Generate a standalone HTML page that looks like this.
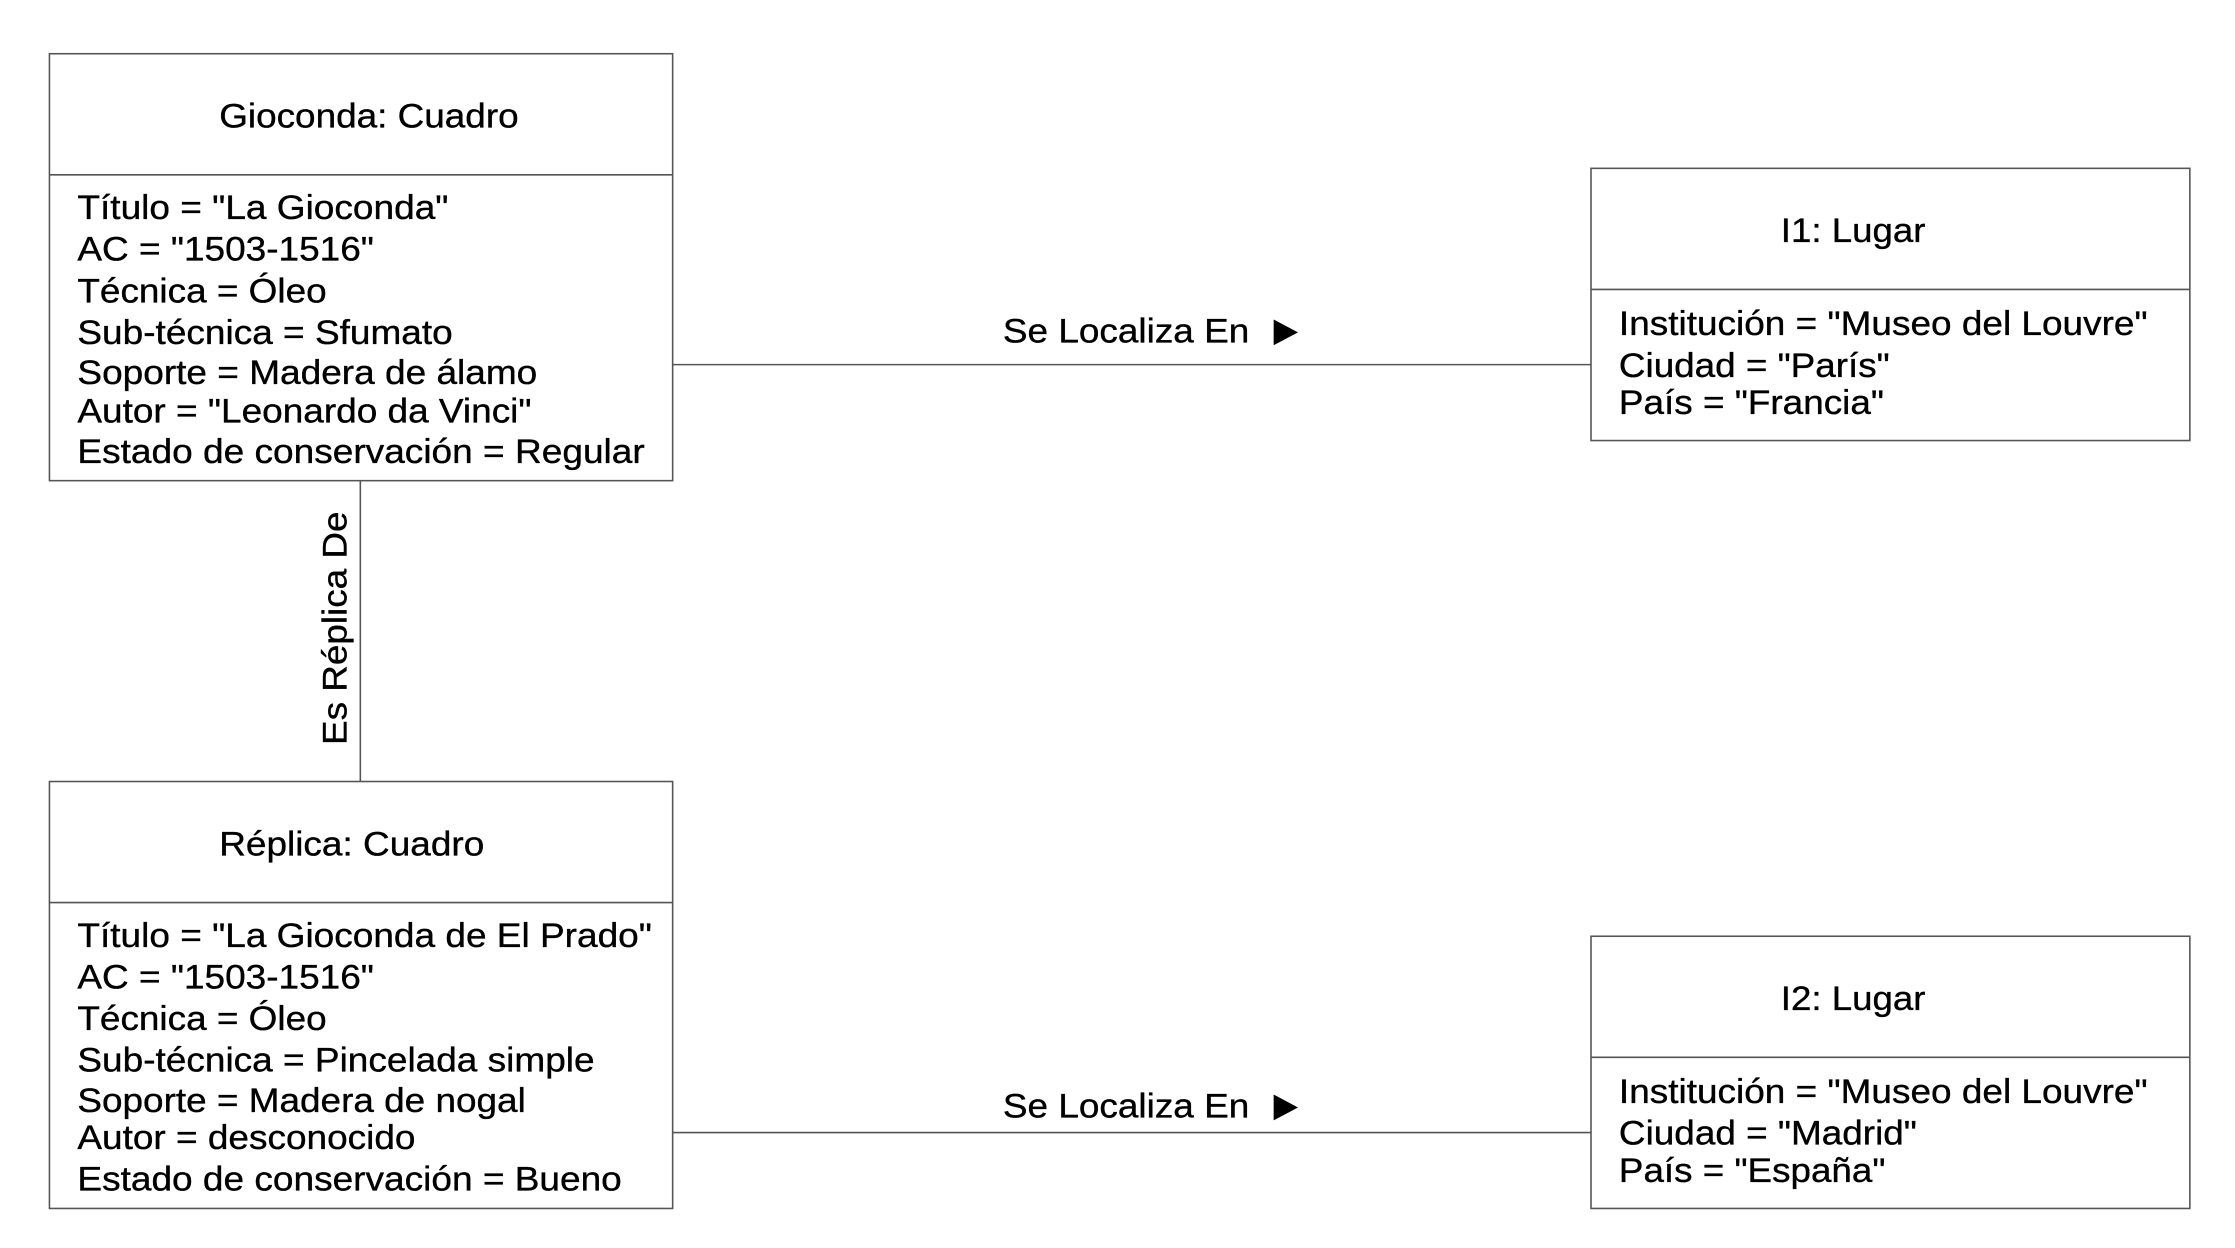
<!DOCTYPE html>
<html><head><meta charset="utf-8"><style>html,body{margin:0;padding:0;background:#fff;overflow:hidden}svg{display:block}text{font-family:"Liberation Sans",Arial,sans-serif;font-size:24px;fill:#000;stroke:#000;stroke-width:0.25px}</style></head>
<body>
<svg width="2235" height="1248" viewBox="0 0 1560 871.1" xmlns="http://www.w3.org/2000/svg">
<g fill="none" stroke="#555" stroke-width="1.1">
<rect x="34.5" y="37.5" width="435" height="298"/><line x1="34.5" y1="122" x2="469.5" y2="122"/>
<rect x="1110.5" y="117.5" width="418" height="190"/><line x1="1110.5" y1="202" x2="1528.5" y2="202"/>
<rect x="34.5" y="545.5" width="435" height="298"/><line x1="34.5" y1="630" x2="469.5" y2="630"/>
<rect x="1110.5" y="653.5" width="418" height="190"/><line x1="1110.5" y1="738" x2="1528.5" y2="738"/>
<line x1="469.5" y1="254.5" x2="1110.5" y2="254.5"/>
<line x1="469.5" y1="790.5" x2="1110.5" y2="790.5"/>
<line x1="251.5" y1="335.5" x2="251.5" y2="545.5"/>
</g>
<text x="153" y="89" textLength="209" lengthAdjust="spacingAndGlyphs">Gioconda: Cuadro</text>
<text x="54" y="153" textLength="259" lengthAdjust="spacingAndGlyphs">Título = "La Gioconda"</text>
<text x="54" y="182" textLength="207" lengthAdjust="spacingAndGlyphs">AC = "1503-1516"</text>
<text x="54" y="211" textLength="174" lengthAdjust="spacingAndGlyphs">Técnica = Óleo</text>
<text x="54" y="240" textLength="262" lengthAdjust="spacingAndGlyphs">Sub-técnica = Sfumato</text>
<text x="54" y="268" textLength="321" lengthAdjust="spacingAndGlyphs">Soporte = Madera de álamo</text>
<text x="54" y="295" textLength="317" lengthAdjust="spacingAndGlyphs">Autor = "Leonardo da Vinci"</text>
<text x="54" y="323" textLength="396" lengthAdjust="spacingAndGlyphs">Estado de conservación = Regular</text>

<text x="1243" y="169" textLength="101" lengthAdjust="spacingAndGlyphs">I1: Lugar</text>
<text x="1130" y="234" textLength="369" lengthAdjust="spacingAndGlyphs">Institución = "Museo del Louvre"</text>
<text x="1130" y="263" textLength="189" lengthAdjust="spacingAndGlyphs">Ciudad = "París"</text>
<text x="1130" y="289" textLength="185" lengthAdjust="spacingAndGlyphs">País = "Francia"</text>

<text x="153" y="597" textLength="185" lengthAdjust="spacingAndGlyphs">Réplica: Cuadro</text>
<text x="54" y="661" textLength="401" lengthAdjust="spacingAndGlyphs">Título = "La Gioconda de El Prado"</text>
<text x="54" y="690" textLength="207" lengthAdjust="spacingAndGlyphs">AC = "1503-1516"</text>
<text x="54" y="719" textLength="174" lengthAdjust="spacingAndGlyphs">Técnica = Óleo</text>
<text x="54" y="748" textLength="361" lengthAdjust="spacingAndGlyphs">Sub-técnica = Pincelada simple</text>
<text x="54" y="776" textLength="313" lengthAdjust="spacingAndGlyphs">Soporte = Madera de nogal</text>
<text x="54" y="802" textLength="236" lengthAdjust="spacingAndGlyphs">Autor = desconocido</text>
<text x="54" y="831" textLength="380" lengthAdjust="spacingAndGlyphs">Estado de conservación = Bueno</text>

<text x="1243" y="705" textLength="101" lengthAdjust="spacingAndGlyphs">I2: Lugar</text>
<text x="1130" y="770" textLength="369" lengthAdjust="spacingAndGlyphs">Institución = "Museo del Louvre"</text>
<text x="1130" y="799" textLength="208" lengthAdjust="spacingAndGlyphs">Ciudad = "Madrid"</text>
<text x="1130" y="825" textLength="186" lengthAdjust="spacingAndGlyphs">País = "España"</text>

<text x="700" y="239" textLength="172" lengthAdjust="spacingAndGlyphs">Se Localiza En</text>
<polygon points="889,223 906,232 889,241" fill="#000"/>
<text x="700" y="780" textLength="172" lengthAdjust="spacingAndGlyphs">Se Localiza En</text>
<polygon points="889,764 906,773 889,782" fill="#000"/>

<text transform="translate(242,520) rotate(-90)" x="0" y="0" textLength="163" lengthAdjust="spacingAndGlyphs">Es Réplica De</text>
</svg>
</body></html>
